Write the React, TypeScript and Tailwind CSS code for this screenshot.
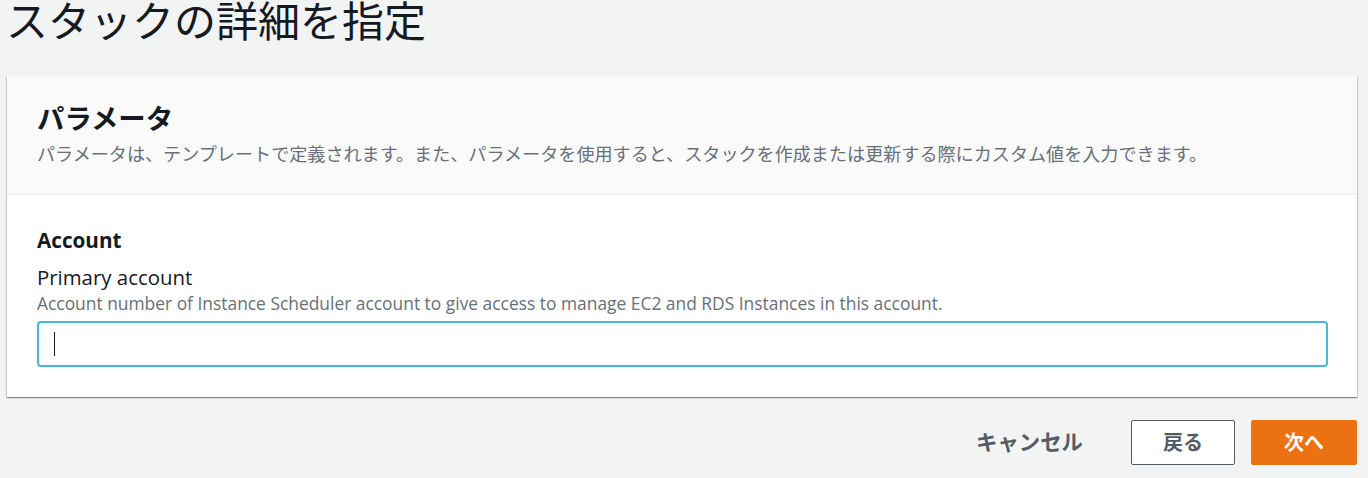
export default function App() {
  return (
    <div
      className="min-h-[478px] w-full bg-[#f2f3f3] text-[#16191f]"
      style={{ fontFamily: '"Open Sans", "Noto Sans CJK JP", sans-serif' }}
    >
      <div className="pl-[7px] pr-[11px]">
        <h1 className="-ml-px text-[42px] font-normal leading-[42px]">スタックの詳細を指定</h1>

        <div className="mt-[34px] bg-white shadow-[0_1px_1px_0_rgba(0,28,36,0.3),1px_1px_1px_0_rgba(0,28,36,0.15),-1px_1px_1px_0_rgba(0,28,36,0.15)]">
          <div className="border-b border-[#eaeded] bg-[#fafafa] pl-[30px] pr-[29px] pt-[24px] pb-[27px]">
            <h2 className="text-[27.4px] font-bold leading-[38px]">パラメータ</h2>
            <p className="mt-[3px] text-[18.1px] leading-[26px] text-[#687078]">
              パラメータは、テンプレートで定義されます。また、パラメータを使用すると、スタックを作成または更新する際にカスタム値を入力できます。
            </p>
          </div>
          <div className="pl-[30px] pr-[29px] pt-[31px] pb-[30px]">
            <h3 className="text-[20.7px] font-bold leading-[28px]">Account</h3>
            <div className="mt-[9px] text-[20.4px] leading-[28px]">Primary account</div>
            <div className="text-[17.4px] leading-[24px] text-[#687078]">
              Account number of Instance Scheduler account to give access to manage EC2 and RDS Instances in this account.
            </div>
            <div className="mt-[6px] flex h-[46px] items-center rounded-[4px] border-2 border-[#44b9d6] bg-white pl-[15px]">
              <div className="h-[24px] w-px bg-[#16191f]" />
            </div>
          </div>
        </div>

        <div className="mt-[23px] flex items-center justify-end gap-[16px]">
          <button className="mr-[32px] text-[21.4px] font-bold text-[#545b64]">キャンセル</button>
          <button className="h-[45px] w-[104px] rounded-[2px] border border-[#545b64] bg-white text-[20px] font-bold text-[#545b64]">
            戻る
          </button>
          <button className="h-[45px] w-[106px] rounded-[2px] bg-[#ec7211] text-[20px] font-bold text-white">
            次へ
          </button>
        </div>
      </div>
    </div>
  );
}
